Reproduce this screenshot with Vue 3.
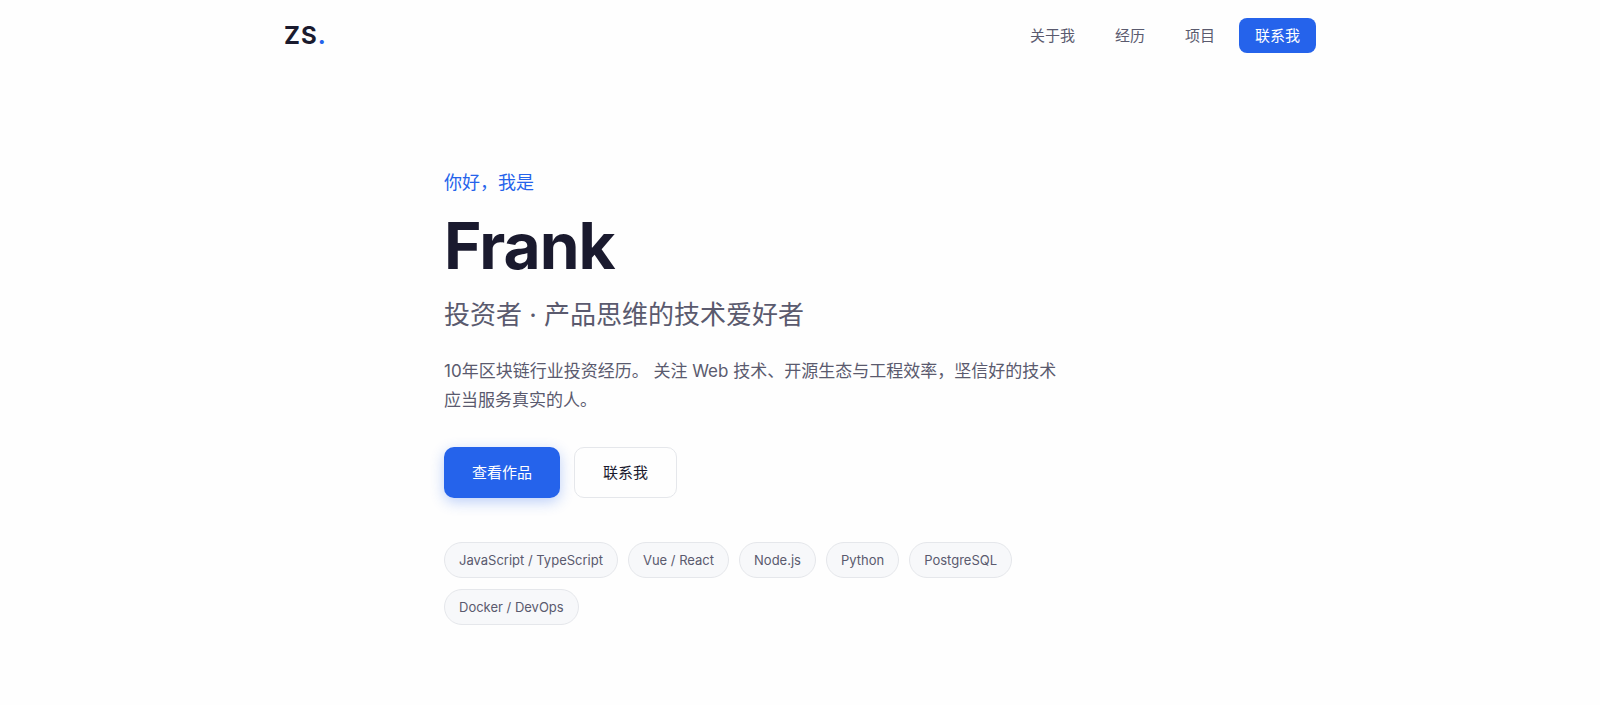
<script setup>
const links = [
  { label: '关于我', href: '#about' },
  { label: '经历', href: '#experience' },
  { label: '项目', href: '#projects' },
]
const tags = ['JavaScript / TypeScript', 'Vue / React', 'Node.js', 'Python', 'PostgreSQL', 'Docker / DevOps']
</script>

<template>
  <header class="nav">
    <div class="nav-inner">
      <a class="logo" href="#top">ZS<span class="dot">.</span></a>
      <nav class="links">
        <a v-for="l in links" :key="l.href" class="link" :href="l.href">{{ l.label }}</a>
        <a class="link cta" href="#contact">联系我</a>
      </nav>
    </div>
  </header>
  <main class="hero">
    <p class="greeting">你好，我是</p>
    <h1 class="name">Frank</h1>
    <p class="role">投资者 · 产品思维的技术爱好者</p>
    <p class="intro">10年区块链行业投资经历。 关注 Web 技术、开源生态与工程效率，坚信好的技术应当服务真实的人。</p>
    <div class="actions">
      <a class="btn primary" href="#projects">查看作品</a>
      <a class="btn outline" href="#contact">联系我</a>
    </div>
    <ul class="tags">
      <li v-for="t in tags" :key="t" class="tag">{{ t }}</li>
    </ul>
  </main>
</template>

<style>
body {
  background: #fefefe;
  color: #1a1a2e;
  font-family: Inter, "Noto Sans CJK SC", sans-serif;
  font-size: 16px;
  line-height: 1.7;
}
</style>

<style scoped>
a {
  text-decoration: none;
}
.nav-inner {
  box-sizing: border-box;
  max-width: 1080px;
  margin: 0 auto;
  padding: 15px 24px;
  display: flex;
  align-items: center;
  justify-content: space-between;
}
.logo {
  font-size: 24px;
  line-height: 41px;
  font-weight: 700;
  letter-spacing: 1px;
  color: #1a1a2e;
}
.dot {
  color: #2563eb;
}
.links {
  display: flex;
  align-items: center;
  gap: 8px;
}
.link {
  padding: 5px 16px;
  font-size: 15px;
  line-height: 25px;
  color: #5a5a6e;
}
.cta {
  background: #2563eb;
  color: #fff;
  border-radius: 8px;
}
.hero {
  box-sizing: border-box;
  max-width: 760px;
  margin: 0 auto;
  padding: 97px 24px 80px;
}
.greeting {
  margin: 0 0 13px;
  font-size: 18px;
  line-height: 30px;
  color: #2563eb;
}
.name {
  margin: 0 0 12px;
  font-size: 64px;
  line-height: 70px;
  letter-spacing: -1px;
  font-weight: 700;
}
.role {
  margin: 0 0 20px;
  font-size: 26px;
  line-height: 44px;
  color: #5a5a6e;
}
.intro {
  margin: 0 0 32px;
  max-width: 620px;
  font-size: 17px;
  line-height: 29px;
  color: #5a5a6e;
}
.actions {
  display: flex;
  gap: 14px;
  margin-bottom: 44px;
}
.btn {
  padding: 12px 28px;
  font-size: 15px;
  line-height: 25px;
  border-radius: 10px;
}
.primary {
  padding: 13px 28px;
  background: #2563eb;
  color: #fff;
  box-shadow: 0 4px 14px rgba(37, 99, 235, 0.3);
}
.outline {
  border: 1px solid #e5e7eb;
  color: #1a1a2e;
}
.tags {
  display: flex;
  flex-wrap: wrap;
  gap: 11px 10px;
  max-width: 620px;
  margin: 0;
  padding: 0;
  list-style: none;
}
.tag {
  padding: 6px 14px;
  font-size: 13px;
  line-height: 22px;
  color: #5a5a6e;
  background: #f7f8fa;
  border: 1px solid #e5e7eb;
  border-radius: 99px;
}
</style>
